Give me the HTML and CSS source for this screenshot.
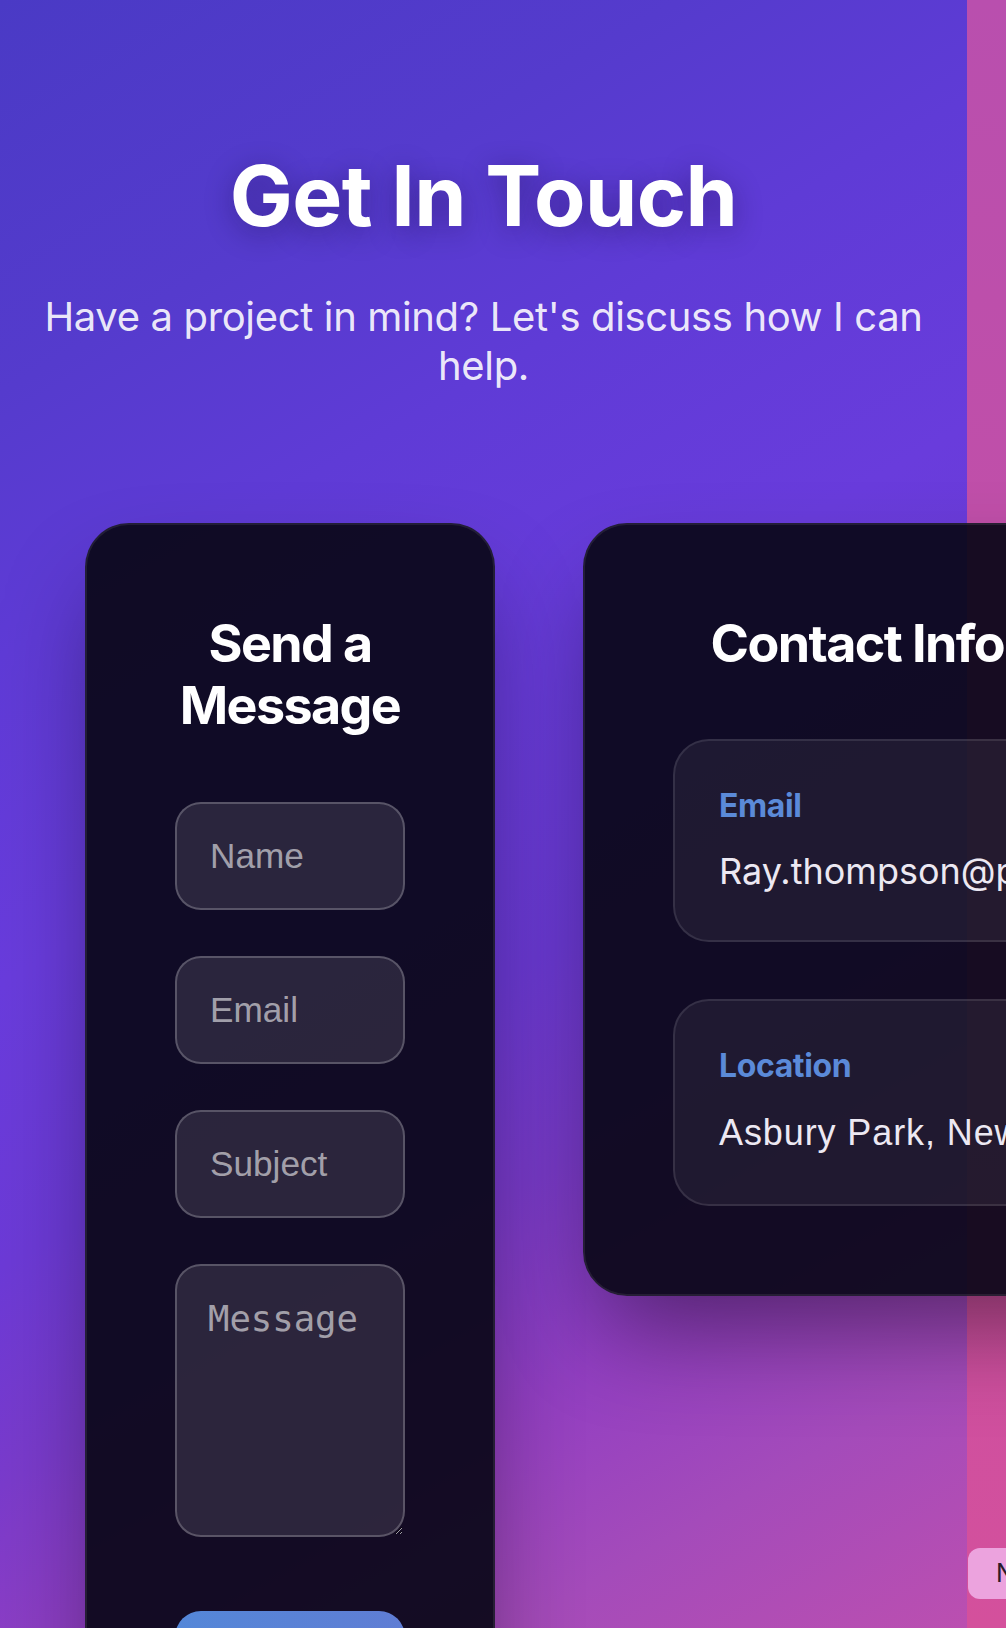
FILE: index.html
```html
<!DOCTYPE html>
<html lang="en">
<head>
<meta charset="utf-8">
<title>Get In Touch</title>
<link rel="stylesheet" href="styles.css">
</head>
<body>
  <section class="contact">
    <h1 class="contact-title">Get In Touch</h1>
    <p class="contact-subtitle">Have a project in mind? Let's discuss how I can help.</p>
    <div class="contact-grid">
      <div class="card form-card">
        <h2 class="card-title">Send a Message</h2>
        <form class="form">
          <input class="field" type="text" placeholder="Name">
          <input class="field" type="email" placeholder="Email">
          <input class="field" type="text" placeholder="Subject">
          <textarea class="field field-area" placeholder="Message"></textarea>
          <button class="send-btn" type="button">Send Message</button>
        </form>
      </div>
      <div class="card info-card">
        <h2 class="card-title">Contact Information</h2>
        <div class="info-list">
          <div class="info-item">
            <h3 class="info-label">Email</h3>
            <p class="info-value info-email">Ray.thompson@portfolio.com</p>
          </div>
          <div class="info-item">
            <h3 class="info-label">Location</h3>
            <p class="info-value info-location">Asbury Park, New Jersey</p>
          </div>
        </div>
      </div>
    </div>
  </section>
  <div class="side-pill">Next</div>
</body>
</html>
```

FILE: styles.css
```css
html, body {
  margin: 0;
  padding: 0;
  height: 100%;
  overflow: hidden;
}

body {
  background: linear-gradient(180deg, #b94fae 0%, #c44fa6 50%, #d4509c 100%);
  font-family: "Inter", "Noto Sans", sans-serif;
}

.contact {
  width: 967px;
  height: 100%;
  box-sizing: border-box;
  padding: 146px 40px 0;
  text-align: center;
  background: linear-gradient(150deg,
    #4a3ac5 0%,
    #553bcd 18%,
    #5f3bd6 30%,
    #693cdc 45%,
    #6c3ad6 58%,
    #7a3bcb 68%,
    #923fc2 78%,
    #a44bba 88%,
    #bb4fb0 100%);
}

.contact-title {
  margin: 0;
  font-size: 84px;
  line-height: 1.2;
  font-weight: 700;
  letter-spacing: -0.6px;
  color: #ffffff;
  text-shadow: 0 6px 28px rgba(20, 10, 60, 0.4);
}

.contact-subtitle {
  margin: 45px 0 0;
  font-size: 40px;
  line-height: 49px;
  font-weight: 400;
  letter-spacing: -0.35px;
  color: rgba(255, 255, 255, 0.9);
}

.contact-grid {
  display: grid;
  grid-template-columns: 410px 734px;
  column-gap: 88px;
  align-items: start;
  margin: 133px 0 0 45px;
  text-align: center;
}

.card {
  box-sizing: border-box;
  padding: 88px;
  border: 2px solid rgba(255, 255, 255, 0.08);
  border-radius: 44px;
  background: rgba(10, 8, 24, 0.93);
  box-shadow: 0 50px 100px -20px rgba(0, 0, 0, 0.45);
}

.card-title {
  margin: 0 0 64px;
  font-size: 52px;
  line-height: 1.2;
  font-weight: 700;
  letter-spacing: -1.6px;
  color: #ffffff;
}

.form {
  display: flex;
  flex-direction: column;
  gap: 46px;
}

.field {
  display: block;
  width: 100%;
  box-sizing: border-box;
  margin: 0;
  padding: 32px 33px;
  border: 2px solid rgba(255, 255, 255, 0.22);
  border-radius: 26px;
  background: rgba(255, 255, 255, 0.11);
  color: #ffffff;
  font-family: "Liberation Sans", Arial, sans-serif;
  font-size: 35.2px;
  outline: none;
}

.field::placeholder {
  color: rgba(255, 255, 255, 0.58);
}

.field-area {
  height: 273px;
  padding: 32px 31px;
  font-family: "DejaVu Sans Mono", monospace;
  font-size: 35.6px;
}

.send-btn {
  display: block;
  width: 100%;
  margin-top: 28px;
  padding: 32px 30px;
  border: none;
  border-radius: 26px;
  background: linear-gradient(90deg, #5487d8 0%, #5f7dd4 100%);
  color: #ffffff;
  font-family: "Inter", sans-serif;
  font-size: 35px;
  font-weight: 600;
}

.info-list {
  display: flex;
  flex-direction: column;
  gap: 57px;
  text-align: left;
}

.info-item {
  padding: 46px 44px 47px;
  border: 2px solid rgba(255, 255, 255, 0.1);
  border-radius: 36px;
  background: rgba(255, 255, 255, 0.06);
}

.info-label {
  margin: 0 0 24px;
  font-size: 32px;
  line-height: 38px;
  font-weight: 700;
  letter-spacing: -0.4px;
  color: #5b8ad8;
}

.info-value {
  margin: 0;
  font-size: 36px;
  line-height: 44px;
  color: #ece8f2;
  white-space: nowrap;
}

.info-location {
  font-family: "Liberation Sans", Arial, sans-serif;
  letter-spacing: 0.9px;
  line-height: 48px;
}

.side-pill {
  position: fixed;
  left: 968px;
  top: 1548px;
  height: 51px;
  padding: 0 30px 0 28px;
  border-radius: 12px;
  background: #eca3de;
  color: #2b1b2b;
  font-size: 25px;
  line-height: 51px;
  white-space: nowrap;
}
```
